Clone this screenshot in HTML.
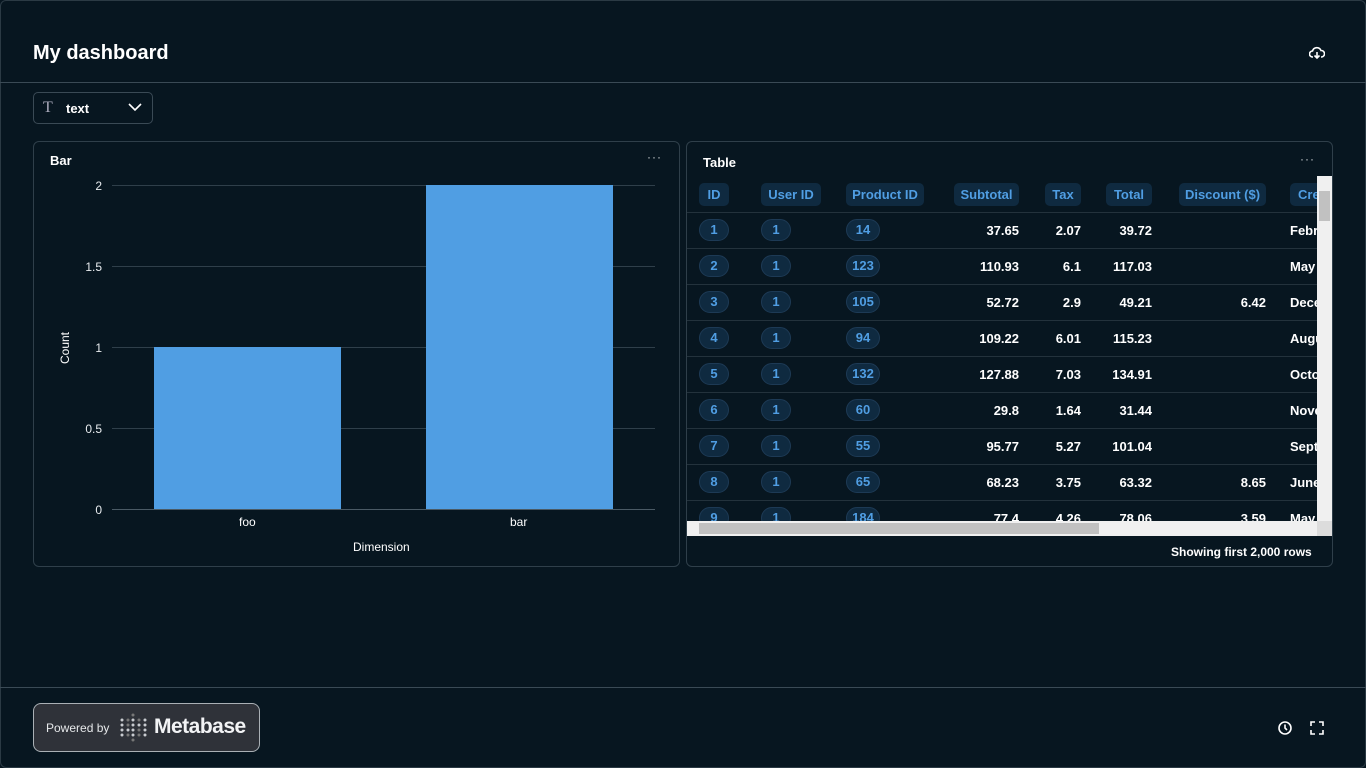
<!DOCTYPE html>
<html><head><style>
*{box-sizing:border-box;margin:0;padding:0}
body{width:1366px;height:768px;background:#071620;font-family:"Liberation Sans",sans-serif;color:#fff;position:relative;overflow:hidden}
.frame{position:absolute;left:0;top:0;width:1366px;height:768px;border:1px solid #2b3a44;border-radius:6px}
.abs{position:absolute}
.card{position:absolute;border:1px solid #2f3f4a;border-radius:6px;background:#071620}
.pill{position:absolute;height:22px;border-radius:11px;background:#0f2a40;border:1px solid #1d3a55;color:#509ee3;font-size:13px;font-weight:bold;line-height:20px;text-align:center}
.hd{position:absolute;height:23px;border-radius:5px;background:#0f2a40;color:#509ee3;font-size:13px;font-weight:bold;line-height:23px;text-align:center;white-space:nowrap}
.num{position:absolute;font-size:13px;font-weight:bold;text-align:right;width:80px;white-space:nowrap}
.rl{position:absolute;left:687px;width:630px;height:1px;background:#23323c}
.gl{position:absolute;left:112px;width:543px;height:1px;background:#2f3f4a}
.yl{position:absolute;width:40px;text-align:right;font-size:12px;color:#e8ecef}
</style></head><body>
<div class="frame"></div>
<div class="abs" style="left:33px;top:42px;font-size:20px;font-weight:bold">My dashboard</div>
<svg class="abs" style="left:1309px;top:46px" width="16" height="14" viewBox="0 0 16 14"><path d="M4 11H3.5A3 3 0 0 1 3.5 5 4.5 4.5 0 0 1 12 4.5 3 3 0 0 1 12.5 11H12M8 6v6M5.5 9.5 8 12l2.5-2.5" fill="none" stroke="#fff" stroke-width="1.6"/></svg>
<div class="abs" style="left:0;top:82px;width:1366px;height:1px;background:#3a4a55"></div>
<div class="abs" style="left:33px;top:92px;width:120px;height:32px;border:1px solid #3a4a55;border-radius:5px"></div>
<div class="abs" style="left:43px;top:99px;font-family:'Liberation Serif',serif;font-size:16px;color:#aab">T</div>
<div class="abs" style="left:66px;top:101px;font-size:13px;font-weight:bold">text</div>
<svg class="abs" style="left:128px;top:103px" width="14" height="9"><path d="M1 1l6 6 6-6" fill="none" stroke="#fff" stroke-width="1.6"/></svg>

<div class="card" style="left:33px;top:141px;width:647px;height:426px"></div>
<div class="abs" style="left:50px;top:153px;font-size:13px;font-weight:bold">Bar</div>
<div class="abs" style="left:647px;top:150px;color:#c8ccd0;font-size:12px;letter-spacing:1px">···</div>
<div class="gl" style="top:185px"></div><div class="gl" style="top:266px"></div><div class="gl" style="top:347px"></div><div class="gl" style="top:428px"></div><div class="gl" style="top:509px;background:#4a5a65"></div>
<div class="yl" style="left:62px;top:179px">2</div><div class="yl" style="left:62px;top:260px">1.5</div><div class="yl" style="left:62px;top:341px">1</div><div class="yl" style="left:62px;top:422px">0.5</div><div class="yl" style="left:62px;top:503px">0</div>
<div class="abs" style="left:154px;top:347px;width:187px;height:162px;background:#509ee3"></div>
<div class="abs" style="left:426px;top:185px;width:187px;height:324px;background:#509ee3"></div>
<div class="abs" style="left:239px;top:515px;font-size:12px">foo</div>
<div class="abs" style="left:510px;top:515px;font-size:12px">bar</div>
<div class="abs" style="left:353px;top:540px;font-size:12px">Dimension</div>
<div class="abs" style="left:45px;top:341px;font-size:12px;transform:rotate(-90deg);width:40px;text-align:center">Count</div>

<div class="card" style="left:686px;top:141px;width:647px;height:426px"></div>
<div class="abs" style="left:703px;top:155px;font-size:13px;font-weight:bold">Table</div>
<div class="abs" style="left:1300px;top:152px;color:#c8ccd0;font-size:12px;letter-spacing:1px">···</div>
<div style="position:absolute;left:687px;top:176px;width:630px;height:345px;overflow:hidden">
<div style="position:absolute;left:-687px;top:-176px;width:1400px;height:800px">
<div class="hd" style="left:699px;top:183px;width:30px">ID</div>
<div class="hd" style="left:761px;top:183px;width:60px">User ID</div>
<div class="hd" style="left:846px;top:183px;width:78px">Product ID</div>
<div class="hd" style="left:954px;top:183px;width:65px">Subtotal</div>
<div class="hd" style="left:1045px;top:183px;width:36px">Tax</div>
<div class="hd" style="left:1106px;top:183px;width:46px">Total</div>
<div class="hd" style="left:1179px;top:183px;width:87px">Discount ($)</div>
<div class="hd" style="left:1290px;top:183px;width:90px;text-align:left;padding-left:8px">Created At</div>
<div class="rl" style="top:212px"></div>
</div>
<div id="rows" style="position:absolute;left:-687px;top:-176px;width:1400px;height:800px"></div>
</div>
<script>
var d=[[1,1,14,"37.65","2.07","39.72","","February"],[2,1,123,"110.93","6.1","117.03","","May"],[3,1,105,"52.72","2.9","49.21","6.42","December"],[4,1,94,"109.22","6.01","115.23","","August"],[5,1,132,"127.88","7.03","134.91","","October"],[6,1,60,"29.8","1.64","31.44","","November"],[7,1,55,"95.77","5.27","101.04","","September"],[8,1,65,"68.23","3.75","63.32","8.65","June"],[9,1,184,"77.4","4.26","78.06","3.59","May"]];
var h="";d.forEach(function(r,i){var c=230+36*i,t=c-11;
function p(x,v){var w=String(v).length>1?34:30;return '<div class="pill" style="left:'+x+'px;top:'+t+'px;width:'+w+'px">'+v+'</div>'}
h+=p(699,r[0])+p(761,r[1])+p(846,r[2]);
function n(rx,v){return '<div class="num" style="left:'+(rx-80)+'px;top:'+(c-7)+'px">'+v+'</div>'}
h+=n(1019,r[3])+n(1081,r[4])+n(1152,r[5])+n(1266,r[6]);
h+='<div class="num" style="left:1290px;top:'+(c-7)+'px;text-align:left">'+r[7]+'</div>';
h+='<div class="rl" style="top:'+(c+18)+'px"></div>';});
document.getElementById("rows").innerHTML=h;
</script>
<div class="abs" style="left:1317px;top:176px;width:15px;height:345px;background:#f0f0f0"></div>
<div class="abs" style="left:1319px;top:191px;width:11px;height:30px;background:#c1c1c1"></div>
<div class="abs" style="left:687px;top:521px;width:630px;height:15px;background:#f0f0f0"></div>
<div class="abs" style="left:699px;top:523px;width:400px;height:11px;background:#c1c1c1"></div>
<div class="abs" style="left:1317px;top:521px;width:15px;height:15px;background:#dcdcdc"></div>
<div class="abs" style="left:1171px;top:545px;font-size:12px;font-weight:bold">Showing first 2,000 rows</div>

<div class="abs" style="left:0;top:687px;width:1366px;height:1px;background:#3a4a55"></div>
<div class="abs" style="left:33px;top:703px;width:227px;height:49px;border:1px solid #aab0b5;border-radius:8px;background:#2f3239"></div>
<div class="abs" style="left:46px;top:721px;font-size:12px;color:#e6e8ea">Powered by</div>
<svg class="abs" style="left:119px;top:713px" width="28" height="30"><g fill="#c8cbd0">
<circle cx="3" cy="7" r="1.5"/><circle cx="3" cy="12" r="1.5"/><circle cx="3" cy="17" r="1.5"/><circle cx="3" cy="22" r="1.5"/>
<circle cx="26" cy="7" r="1.5"/><circle cx="26" cy="12" r="1.5"/><circle cx="26" cy="17" r="1.5"/><circle cx="26" cy="22" r="1.5"/>
<circle cx="14" cy="2" r="1.5" fill="#777"/><circle cx="14" cy="7" r="1.5"/><circle cx="14" cy="12" r="1.5"/><circle cx="14" cy="17" r="1.5"/><circle cx="14" cy="22" r="1.5"/><circle cx="14" cy="27" r="1.5" fill="#777"/>
<circle cx="9" cy="7" r="1.5" fill="#777"/><circle cx="9" cy="12" r="1.5" fill="#777"/><circle cx="9" cy="17" r="1.5"/><circle cx="9" cy="22" r="1.5" fill="#777"/>
<circle cx="20" cy="7" r="1.5" fill="#777"/><circle cx="20" cy="12" r="1.5"/><circle cx="20" cy="17" r="1.5" fill="#777"/><circle cx="20" cy="22" r="1.5" fill="#777"/></g></svg>
<div class="abs" style="left:154px;top:715px;font-size:21px;font-weight:bold;color:#f2f3f5;letter-spacing:-0.5px">Metabase</div>
<svg class="abs" style="left:1277px;top:720px" width="16" height="16"><circle cx="8" cy="8" r="6" fill="none" stroke="#fff" stroke-width="1.6"/><path d="M8 4.5V8l2 2" fill="none" stroke="#fff" stroke-width="1.6"/></svg>
<svg class="abs" style="left:1310px;top:721px" width="14" height="14"><path d="M1 5V1h4M9 1h4v4M13 9v4H9M5 13H1V9" fill="none" stroke="#fff" stroke-width="1.6"/></svg>
</body></html>
